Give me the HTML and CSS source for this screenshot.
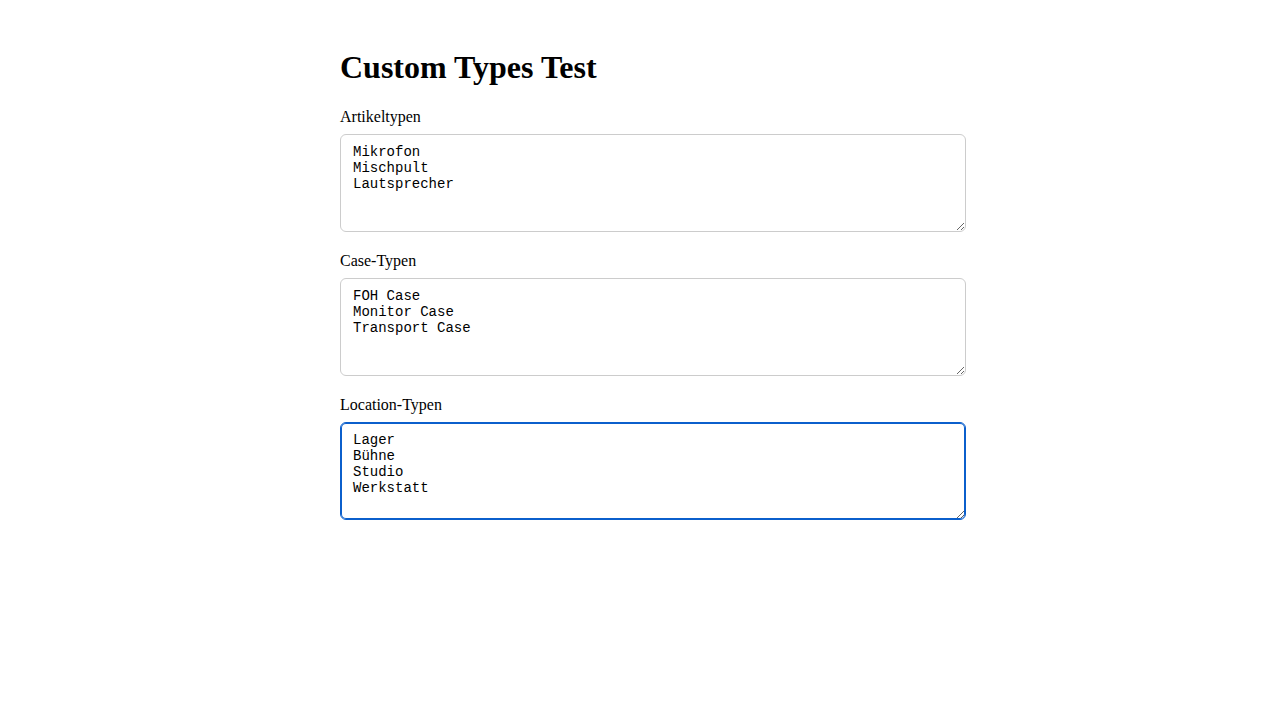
FILE: index.html
```html
<!DOCTYPE html>
<html lang="de">
<head>
<meta charset="utf-8">
<title>Custom Types Test</title>
<link rel="stylesheet" href="styles.css">
</head>
<body>
<div class="container">
  <h1 class="title">Custom Types Test</h1>
  <div class="field">
    <label class="label" for="a">Artikeltypen</label>
    <textarea id="a" class="types" rows="5">Mikrofon
Mischpult
Lautsprecher</textarea>
  </div>
  <div class="field">
    <label class="label" for="b">Case-Typen</label>
    <textarea id="b" class="types" rows="5">FOH Case
Monitor Case
Transport Case</textarea>
  </div>
  <div class="field">
    <label class="label" for="c">Location-Typen</label>
    <textarea id="c" class="types focused" rows="5">Lager
Bühne
Studio
Werkstatt</textarea>
  </div>
</div>
</body>
</html>
```
FILE: styles.css
```css
body {
  margin: 8px;
  font-family: "Liberation Serif", "Times New Roman", serif;
  font-size: 16px;
  color: #000;
  background: #fff;
}
.container {
  max-width: 600px;
  margin: 0 auto;
  padding: 20px;
}
.title {
  font-size: 32px;
  font-weight: bold;
  margin: 21px 0 22px;
  line-height: 37px;
}
.field {
  margin-bottom: 20px;
}
.label {
  display: block;
  line-height: 18px;
  margin-bottom: 8px;
}
.types {
  display: block;
  box-sizing: content-box;
  width: 100%;
  height: 80px;
  margin: 0;
  padding: 9px 12px 7px;
  border: 1px solid #cccccc;
  border-radius: 6px;
  font-family: "Liberation Mono", "Courier New", monospace;
  font-size: 14px;
  line-height: 16px;
  color: #000;
  background: #fff;
  outline: none;
}
.focused {
  border-color: #0b5fcc;
  box-shadow: inset 0 0 0 1px #0b5fcc;
}
```
